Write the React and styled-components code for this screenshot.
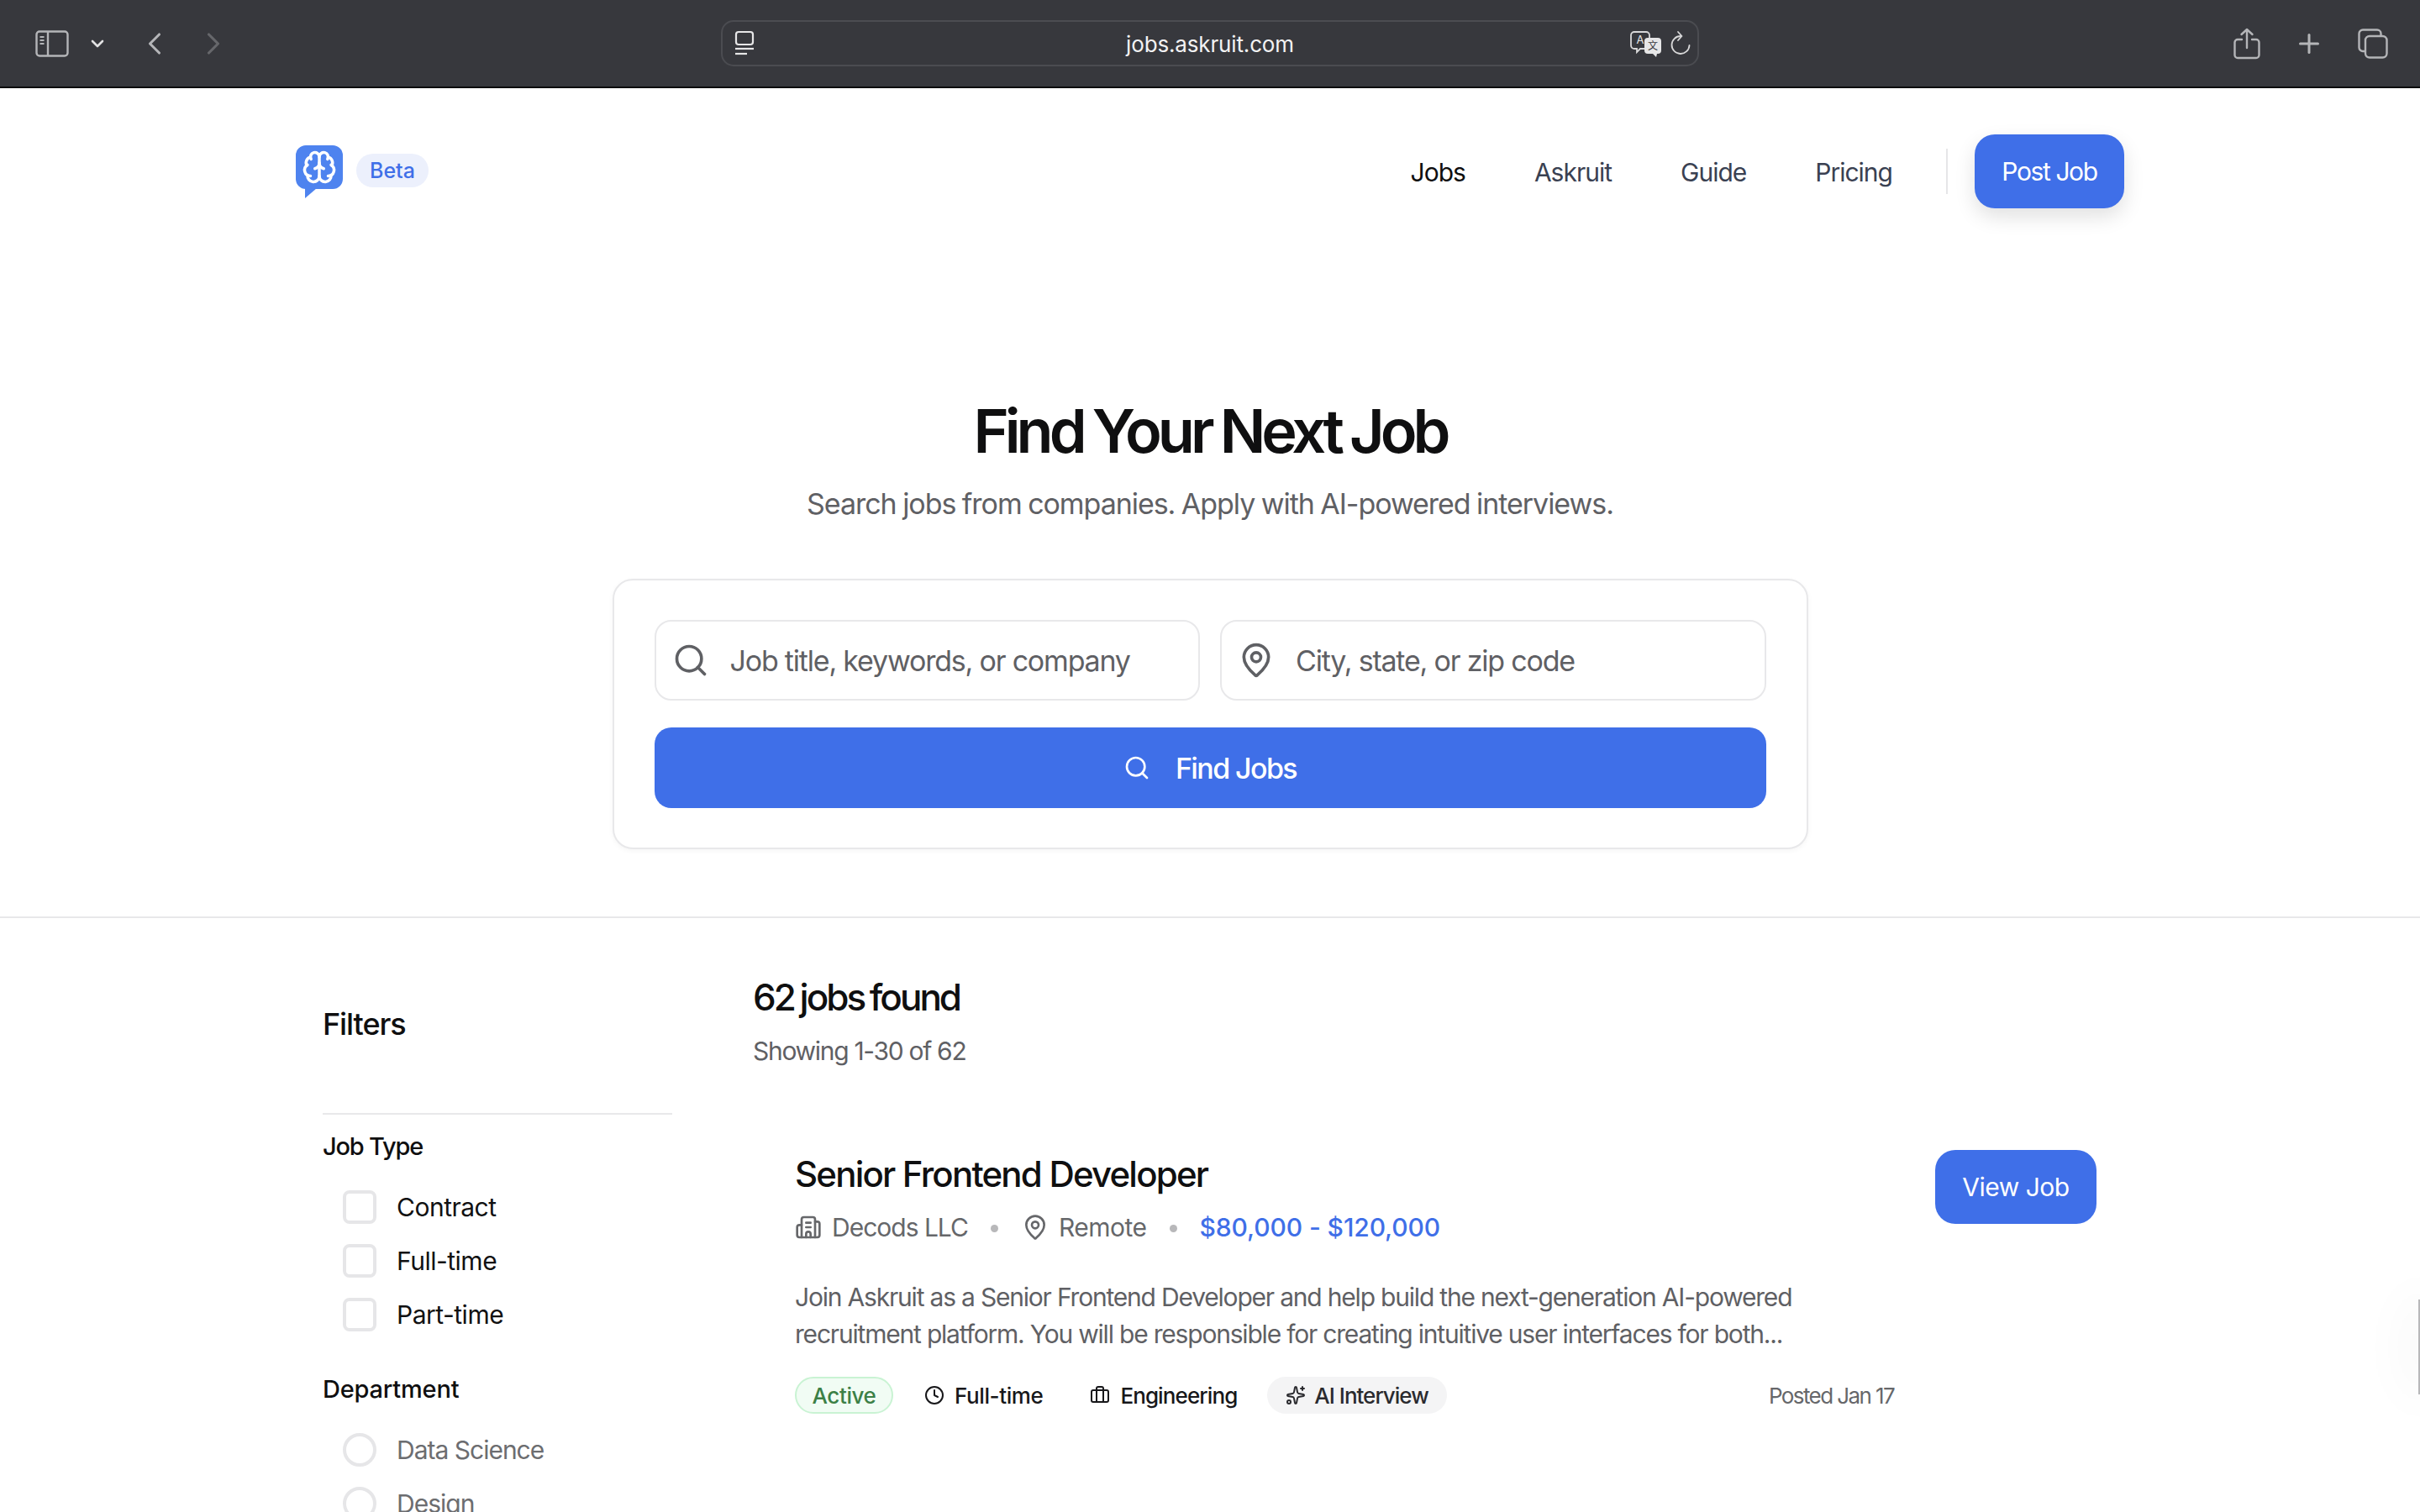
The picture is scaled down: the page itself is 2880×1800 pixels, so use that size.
import React from "react";
import styled, { createGlobalStyle } from "styled-components";
import { Brain, Search, MapPin, Building2, Clock, Briefcase, Sparkles, ChevronLeft, ChevronRight, ChevronDown, Plus } from "lucide-react";

const Global = createGlobalStyle`
  html, body { margin: 0; padding: 0; background: #fff; }
  body { font-family: Inter, "Liberation Sans", sans-serif; color: #0f0f10; }
  * { box-sizing: border-box; }
`;
const Page = styled.div`
  position: relative;
  height: 1800px;
  overflow: hidden;
  background: #fff;
`;
const Toolbar = styled.div`
  height: 105px;
  background: #37383d;
  border-bottom: 2px solid #0c0c0d;
  display: grid;
  grid-template-columns: 1fr 1164px 1fr;
  align-items: center;
`;
const ToolGroup = styled.div`
  display: flex;
  align-items: center;
  justify-content: ${(p) => (p.$end ? "flex-end" : "flex-start")};
  padding: ${(p) => (p.$end ? "0 38px 0 0" : "0 0 0 42px")};
  gap: ${(p) => (p.$end ? "40px" : "0")};
  color: #b4b5b8;
`;
const ToolIcon = styled.span`
  display: flex;
  margin-left: ${(p) => p.$ml || 0}px;
  color: ${(p) => p.$color || "#b4b5b8"};
`;
const AddressBar = styled.div`
  height: 55px;
  border: 2px solid #4b4c51;
  border-radius: 15px;
  display: flex;
  align-items: center;
  padding: 0 8px 0 14px;
  color: #e6e6e7;
`;
const Url = styled.div`
  flex: 1;
  text-align: center;
  font-size: 26px;
  color: #f2f2f3;
  letter-spacing: -0.15px;
  padding: 2px 0 0 42px;
`;
const Header = styled.header`
  display: flex;
  justify-content: space-between;
  align-items: center;
  padding: 55px 352px 0 352px;
`;
const Brand = styled.div`
  display: flex;
  align-items: flex-start;
  gap: 16px;
`;
const LogoBox = styled.div`
  position: relative;
  width: 56px;
  height: 52px;
  margin-bottom: 11px;
  background: #4e83ef;
  border-radius: 12px;
  display: flex;
  align-items: center;
  justify-content: center;
  color: #fff;
  &::after {
    content: "";
    position: absolute;
    left: 11px;
    bottom: -11px;
    width: 0;
    height: 0;
    border-right: 14px solid transparent;
    border-top: 12px solid #4e83ef;
  }
`;
const BetaPill = styled.span`
  margin-top: 10px;
  height: 40px;
  padding: 0 16px;
  border-radius: 20px;
  background: #ecf0fc;
  color: #3f6fe8;
  font-size: 25px;
  font-weight: 500;
  display: flex;
  align-items: center;
`;
const Nav = styled.nav`
  display: flex;
  align-items: center;
`;
const NavLink = styled.a`
  font-size: 30px;
  letter-spacing: -1px;
  font-weight: 400;
  padding-top: 2px;
  color: ${(p) => (p.$active ? "#0f0f10" : "#3a4152")};
  margin-right: 82px;
  &:last-of-type { margin-right: 64px; }
`;
const NavDivider = styled.div`
  width: 2px;
  height: 54px;
  background: #e6e6e8;
  margin-right: 32px;
`;
const PostButton = styled.button`
  width: 178px;
  height: 88px;
  border: 0;
  border-radius: 24px;
  background: #3f6fe8;
  color: #fff;
  font: 400 30px Inter, sans-serif;
  letter-spacing: -1.4px;
  box-shadow: 0 10px 24px rgba(0, 0, 0, 0.12);
`;
const Hero = styled.section`
  display: flex;
  flex-direction: column;
  align-items: center;
  padding: 219px 0 80px;
  border-bottom: 2px solid #e8e8ea;
`;
const Title = styled.h1`
  margin: 0;
  font-size: 72px;
  line-height: 92px;
  font-weight: 600;
  letter-spacing: -5px;
  word-spacing: -2px;
  color: #0f0f10;
`;
const Subtitle = styled.p`
  margin: 16px 0 0;
  font-size: 34px;
  line-height: 50px;
  letter-spacing: -1.05px;
  word-spacing: -1px;
  color: #5f6064;
`;
const SearchCard = styled.div`
  margin-top: 64px;
  width: 1423px;
  padding: 47px 48px;
  border: 2px solid #e8e8ea;
  border-radius: 24px;
  background: #fff;
  box-shadow: 0 2px 6px rgba(0, 0, 0, 0.04);
  display: flex;
  flex-direction: column;
  gap: 32px;
`;
const InputRow = styled.div`
  display: grid;
  grid-template-columns: 1fr 1fr;
  gap: 24px;
`;
const InputField = styled.div`
  height: 96px;
  border: 2px solid #e8e8ea;
  border-radius: 20px;
  display: flex;
  align-items: center;
  gap: 25px;
  padding: 0 19px;
  color: #5f6064;
`;
const Placeholder = styled.span`
  font-size: 34px;
  letter-spacing: -1.2px;
  color: #5f6064;
`;
const FindButton = styled.button`
  height: 96px;
  border: 0;
  border-radius: 20px;
  background: #3f6fe8;
  color: #fff;
  font: 500 34px Inter, sans-serif;
  letter-spacing: -1.6px;
  display: flex;
  align-items: center;
  justify-content: center;
  gap: 30px;
`;
const Content = styled.div`
  display: flex;
  gap: 96px;
  padding: 0 335px 0 384px;
`;
const Sidebar = styled.aside`
  width: 416px;
  flex: none;
`;
const FilterTitle = styled.h2`
  margin: 96px 0 0;
  height: 60px;
  font-size: 36px;
  line-height: 60px;
  font-weight: 500;
  letter-spacing: -1.1px;
`;
const FilterRule = styled.div`
  height: 2px;
  margin-top: 76px;
  background: #e8e8ea;
`;
const GroupTitle = styled.h3`
  margin: ${(p) => p.$mt}px 0 0;
  font-size: 29px;
  line-height: 40px;
  font-weight: 500;
  letter-spacing: ${(p) => p.$ls};
`;
const OptionList = styled.div`
  margin-top: 20px;
  padding-left: 24px;
  display: flex;
  flex-direction: column;
`;
const OptionRow = styled.div`
  height: 64px;
  display: flex;
  align-items: center;
  gap: 24px;
  font-size: 30px;
  letter-spacing: ${(p) => (p.$muted ? "-1px" : "-0.5px")};
  color: ${(p) => (p.$muted ? "#6c6d70" : "#111112")};
`;
const Box = styled.span`
  width: 40px;
  height: 40px;
  border: 4px solid #e6e6e8;
  border-radius: ${(p) => (p.$round ? "50%" : "8px")};
  flex: none;
`;
const Results = styled.main`
  flex: 1;
  min-width: 0;
`;
const ResultsTitle = styled.h2`
  margin: 64px 0 0;
  font-size: 44px;
  line-height: 60px;
  font-weight: 500;
  letter-spacing: -3px;
  word-spacing: -2px;
`;
const ResultsCount = styled.p`
  margin: 12px 0 0;
  font-size: 30px;
  line-height: 44px;
  letter-spacing: -1.3px;
  color: #5f6064;
`;
const JobCard = styled.article`
  margin-top: 44px;
  padding: 50px;
  display: flex;
  flex-direction: column;
`;
const JobTop = styled.div`
  display: flex;
  justify-content: space-between;
  align-items: flex-start;
`;
const JobTitle = styled.h3`
  margin: 6px 0 0;
  font-size: 42px;
  line-height: 50px;
  font-weight: 500;
  letter-spacing: -1.8px;
`;
const MetaRow = styled.div`
  margin-top: 16px;
  display: flex;
  align-items: center;
  font-size: 30px;
  line-height: 44px;
  color: #66676a;
`;
const MetaItem = styled.span`
  display: flex;
  align-items: center;
  gap: 12px;
  margin-left: ${(p) => p.$ml || 0}px;
  letter-spacing: ${(p) => p.$ls};
`;
const Dot = styled.span`
  width: 9px;
  height: 9px;
  border-radius: 50%;
  background: #b8b8ba;
  margin: 2px 27px 0 27px;
`;
const Salary = styled.span`
  color: #3f6fe8;
  font-weight: 500;
  letter-spacing: -0.1px;
`;
const ViewButton = styled.button`
  width: 192px;
  height: 88px;
  margin-top: 2px;
  border: 0;
  border-radius: 24px;
  background: #3f6fe8;
  color: #fff;
  font: 400 30px Inter, sans-serif;
  letter-spacing: -0.5px;
`;
const Description = styled.p`
  margin: 39px 0 0;
  font-size: 30px;
  line-height: 44px;
  letter-spacing: -1.2px;
  color: #5f6064;
  white-space: nowrap;
`;
const TagRow = styled.div`
  margin-top: 29px;
  width: 1308px;
  display: flex;
  align-items: center;
  font-size: 26px;
  font-weight: 500;
  letter-spacing: -0.4px;
`;
const ActiveTag = styled.span`
  height: 44px;
  width: 117px;
  display: flex;
  align-items: center;
  justify-content: center;
  border: 2px solid #c9f3d3;
  border-radius: 22px;
  background: #f1fcf4;
  color: #3c8046;
`;
const PlainTag = styled.span`
  display: flex;
  align-items: center;
  gap: 12px;
  margin-left: ${(p) => p.$ml}px;
  letter-spacing: ${(p) => p.$ls || "-0.4px"};
  color: #17171a;
`;
const AiTag = styled.span`
  height: 44px;
  margin-left: 36px;
  padding: 0 22px;
  display: flex;
  align-items: center;
  gap: 10px;
  border-radius: 22px;
  background: #f4f4f5;
  color: #2a2a2e;
  letter-spacing: -1px;
`;
const Posted = styled.span`
  margin-left: auto;
  font-weight: 400;
  letter-spacing: -1.6px;
  color: #66676a;
`;
const EdgeWidget = styled.div`
  position: absolute;
  right: -10px;
  top: 1547px;
  width: 12px;
  height: 113px;
  background: #b8b8ba;
  box-shadow: 0 0 64px rgba(0, 0, 0, 0.12);
`;

const SidebarIcon = () => (
  <svg width="40" height="32" viewBox="0 0 40 32" fill="none" stroke="currentColor" strokeWidth="2.4">
    <rect x="1.500" y="1.500" width="37" height="29" rx="3.500" />
    <path d="M15 1.500v29" />
    <path d="M5.500 8h5M5.500 12h5M5.500 16h5" strokeWidth="1.800" />
  </svg>
);
const SiteIcon = () => (
  <svg width="24" height="32" viewBox="0 0 24 32" fill="none" stroke="currentColor" strokeWidth="2.200">
    <rect x="2" y="2" width="20" height="15" rx="3" />
    <path d="M1 22h22" />
    <path d="M1 28h14" />
  </svg>
);
const TranslateIcon = () => (
  <svg width="38" height="32" viewBox="0 0 38 32" fill="none">
    <path d="M5 2h14a4 4 0 0 1 4 4v12a4 4 0 0 1-4 4h-7l-4 4v-4H5a4 4 0 0 1-4-4V6a4 4 0 0 1 4-4z" stroke="#d8d8d9" strokeWidth="1.800" />
    <text x="12" y="16" textAnchor="middle" fontSize="13" fontFamily="Inter, sans-serif" fill="#e6e6e7">A</text>
    <path d="M21 9h12a4 4 0 0 1 4 4v11a4 4 0 0 1-4 4h-1l-1 4-4-4h-6a4 4 0 0 1-4-4V13a4 4 0 0 1 4-4z" fill="#e6e6e7" />
    <text x="27" y="23" textAnchor="middle" fontSize="12" fontFamily='"Noto Sans CJK SC", sans-serif' fill="#37383d">文</text>
  </svg>
);
const ReloadIcon = () => (
  <svg width="24" height="32" viewBox="0 0 24 32" fill="none" stroke="#d8d8d9" strokeWidth="1.800" strokeLinecap="round" strokeLinejoin="round">
    <path d="M12 7A10.500 10.500 0 1 0 22.500 18" />
    <path d="M9 2l4.500 5L9 12" />
  </svg>
);
const ShareIcon = () => (
  <svg width="32" height="38" viewBox="0 0 32 38" fill="none" stroke="currentColor" strokeWidth="2.400" strokeLinecap="round" strokeLinejoin="round">
    <path d="M10 14H5a3.500 3.500 0 0 0-3.500 3.500v15A3.500 3.500 0 0 0 5 36h22a3.500 3.500 0 0 0 3.500-3.500v-15A3.500 3.500 0 0 0 27 14h-5" />
    <path d="M16 24V2M9.500 8 16 2l6.500 6" />
  </svg>
);
const TabsIcon = () => (
  <svg width="36" height="36" viewBox="0 0 36 36" fill="none" stroke="currentColor" strokeWidth="2.400">
    <path d="M9 27H6a4.500 4.500 0 0 1-4.500-4.500V6A4.500 4.500 0 0 1 6 1.500h17A4.500 4.500 0 0 1 27.500 6v3" />
    <rect x="9" y="9" width="25.500" height="25.500" rx="5" />
  </svg>
);

const checks = ["Contract", "Full-time", "Part-time"];
const departments = ["Data Science", "Design"];

export default function App() {
  return (
    <Page>
      <Global />
      <Toolbar>
        <ToolGroup>
          <ToolIcon><SidebarIcon /></ToolIcon>
          <ToolIcon $ml={22} $color="#e2e2e3"><ChevronDown size={24} strokeWidth={2.6} /></ToolIcon>
          <ToolIcon $ml={34}><ChevronLeft size={44} strokeWidth={1.7} /></ToolIcon>
          <ToolIcon $ml={26} $color="#66676b"><ChevronRight size={44} strokeWidth={1.7} /></ToolIcon>
        </ToolGroup>
        <AddressBar>
          <SiteIcon />
          <Url>jobs.askruit.com</Url>
          <TranslateIcon />
          <ToolIcon $ml={10}><ReloadIcon /></ToolIcon>
        </AddressBar>
        <ToolGroup $end>
          <ShareIcon />
          <ToolIcon><Plus size={36} strokeWidth={2} /></ToolIcon>
          <TabsIcon />
        </ToolGroup>
      </Toolbar>

      <Header>
        <Brand>
          <LogoBox><Brain size={42} strokeWidth={2} /></LogoBox>
          <BetaPill>Beta</BetaPill>
        </Brand>
        <Nav>
          <NavLink $active>Jobs</NavLink>
          <NavLink>Askruit</NavLink>
          <NavLink>Guide</NavLink>
          <NavLink>Pricing</NavLink>
          <NavDivider />
          <PostButton>Post Job</PostButton>
        </Nav>
      </Header>

      <Hero>
        <Title>Find Your Next Job</Title>
        <Subtitle>Search jobs from companies. Apply with AI-powered interviews.</Subtitle>
        <SearchCard>
          <InputRow>
            <InputField>
              <Search size={44} strokeWidth={2} />
              <Placeholder>Job title, keywords, or company</Placeholder>
            </InputField>
            <InputField>
              <MapPin size={44} strokeWidth={2} />
              <Placeholder>City, state, or zip code</Placeholder>
            </InputField>
          </InputRow>
          <FindButton>
            <Search size={32} strokeWidth={2} />
            Find Jobs
          </FindButton>
        </SearchCard>
      </Hero>

      <Content>
        <Sidebar>
          <FilterTitle>Filters</FilterTitle>
          <FilterRule />
          <GroupTitle $mt={18} $ls="-1.2px">Job Type</GroupTitle>
          <OptionList>
            {checks.map((c) => (
              <OptionRow key={c}><Box />{c}</OptionRow>
            ))}
          </OptionList>
          <GroupTitle $mt={37} $ls="-0.2px">Department</GroupTitle>
          <OptionList>
            {departments.map((c) => (
              <OptionRow key={c} $muted><Box $round />{c}</OptionRow>
            ))}
          </OptionList>
        </Sidebar>
        <Results>
          <ResultsTitle>62 jobs found</ResultsTitle>
          <ResultsCount>Showing 1-30 of 62</ResultsCount>
          <JobCard>
            <JobTop>
              <div>
                <JobTitle>Senior Frontend Developer</JobTitle>
                <MetaRow>
                  <MetaItem $ls="-1px"><Building2 size={32} strokeWidth={2} />Decods LLC</MetaItem>
                  <Dot />
                  <MetaItem $ml={1} $ls="-0.5px"><MapPin size={32} strokeWidth={2} />Remote</MetaItem>
                  <Dot />
                  <Salary>$80,000 - $120,000</Salary>
                </MetaRow>
              </div>
              <ViewButton>View Job</ViewButton>
            </JobTop>
            <Description>
              Join Askruit as a Senior Frontend Developer and help build the next-generation AI-powered
              <br />
              recruitment platform. You will be responsible for creating intuitive user interfaces for both...
            </Description>
            <TagRow>
              <ActiveTag>Active</ActiveTag>
              <PlainTag $ml={37}><Clock size={24} strokeWidth={2} />Full-time</PlainTag>
              <PlainTag $ml={56} $ls="-0.9px"><Briefcase size={24} strokeWidth={2} />Engineering</PlainTag>
              <AiTag><Sparkles size={24} strokeWidth={2} />AI Interview</AiTag>
              <Posted>Posted Jan 17</Posted>
            </TagRow>
          </JobCard>
        </Results>
      </Content>
      <EdgeWidget />
    </Page>
  );
}
